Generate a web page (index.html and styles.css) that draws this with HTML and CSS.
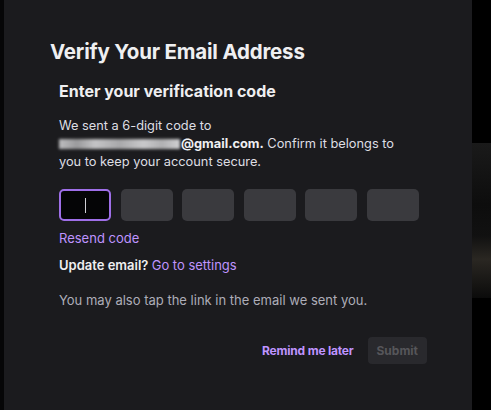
FILE: index.html
```html
<!DOCTYPE html>
<html lang="en">
<head>
    <meta charset="UTF-8">
    <meta name="viewport" content="width=device-width, initial-scale=1.0">
    <title>Verify Your Email Address</title>
    <link rel="stylesheet" href="styles.css">
</head>
<body>
    <div class="backdrop">
        <div class="side side-left"></div>

        <!-- verify modal -->
        <div class="modal">
            <h1 class="modal-title">Verify Your Email Address</h1>

            <div class="modal-body">
                <h2 class="subtitle">Enter your verification code</h2>
                <p class="info">
                    We sent a 6-digit code to<br>
                    <span class="blurred"></span><b>@gmail.com.</b> Confirm it belongs to
                    you to keep your account secure.
                </p>

                <div class="code-row">
                    <div class="code-box active"><span class="caret"></span></div>
                    <div class="code-box"></div>
                    <div class="code-box"></div>
                    <div class="code-box"></div>
                    <div class="code-box"></div>
                    <div class="code-box"></div>
                </div>

                <a class="link resend" href="#">Resend code</a>

                <p class="update">Update email? <a class="link" href="#">Go to settings</a></p>

                <p class="hint">You may also tap the link in the email we sent you.</p>

                <div class="actions">
                    <a class="link remind" href="#">Remind me later</a>
                    <button class="submit" disabled>Submit</button>
                </div>
            </div>
        </div>

        <div class="side side-right"><div class="strip"></div></div>
    </div>
</body>
</html>
```

FILE: styles.css
```css
html, body {
    margin: 0;
    height: 100%;
    background: #000;
}
body {
    font-family: Inter, "Noto Sans", sans-serif;
    color: #efeff1;
    overflow: hidden;
}
.backdrop {
    display: flex;
    height: 410px;
}
.side-left {
    width: 4px;
    background: #060607;
}
.side-right {
    flex: 1;
    padding-top: 143px;
}
.strip {
    height: 155px;
    background: linear-gradient(180deg, #1a1a1a 0%, #0d0d0d 40%, #111 60%, #2a2722 75%, #0b0b0b 100%);
}
.modal {
    width: 468px;
    background: #1b1b1e;
    padding: 38px 0 0 46px;
    box-sizing: border-box;
}
.modal-title {
    margin: 0;
    font-size: 20.5px;
    font-weight: 700;
    letter-spacing: -0.2px;
    line-height: 28px;
}
.modal-body {
    padding-left: 9px;
    width: 373px;
}
.subtitle {
    margin: 13px 0 0;
    font-size: 16px;
    font-weight: 700;
    line-height: 24px;
}
.info {
    margin: 14px 0 0;
    max-width: 345px;
    font-size: 12.8px;
    line-height: 18px;
    color: #dedee3;
}
.info b {
    font-weight: 700;
    color: #efeff1;
}
.blurred {
    display: inline-block;
    vertical-align: -1px;
    width: 121px;
    height: 10px;
    margin-right: 1px;
    background: linear-gradient(90deg, #bdbdbf 0%, #9a9a9c 15%, #c4c4c6 30%, #a8a8aa 50%, #c9c9cb 70%, #b0b0b2 85%, #d0d0d2 100%);
    filter: blur(1.5px);
}
.code-row {
    display: flex;
    gap: 9.6px;
    margin-top: 18px;
}
.code-box {
    width: 52px;
    height: 32px;
    border-radius: 5px;
    background: #3a3a3e;
    box-sizing: border-box;
    display: flex;
    align-items: center;
    justify-content: center;
}
.code-box.active {
    background: #050506;
    border: 2px solid #9f6fe8;
}
.caret {
    width: 1px;
    height: 15px;
    background: #cfcfd4;
}
.link {
    color: #bf94ff;
    text-decoration: none;
}
.resend {
    display: block;
    margin-top: 8px;
    font-size: 13px;
    line-height: 18px;
}
.update {
    margin: 9px 0 0;
    font-size: 13px;
    line-height: 18px;
    font-weight: 600;
}
.update .link {
    font-weight: 400;
}
.hint {
    margin: 17px 0 0;
    font-size: 13px;
    line-height: 18px;
    color: #adadb8;
}
.actions {
    display: flex;
    justify-content: flex-end;
    align-items: center;
    gap: 14px;
    margin-top: 28px;
    padding-right: 5px;
}
.remind {
    font-size: 12px;
    font-weight: 700;
    letter-spacing: -0.2px;
}
.submit {
    font-family: inherit;
    font-size: 12px;
    font-weight: 700;
    color: #56565a;
    background: #29292d;
    border: none;
    border-radius: 4px;
    height: 27px;
    padding: 0 9px;
}
```
